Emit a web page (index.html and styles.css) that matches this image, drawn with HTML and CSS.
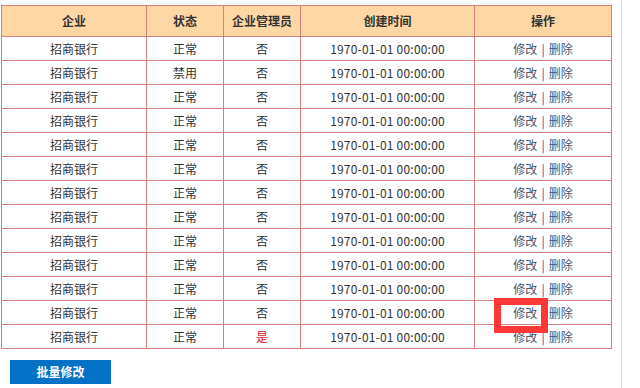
FILE: index.html
```html
<!DOCTYPE html>
<html lang="zh-CN">
<head>
<meta charset="utf-8">
<title>企业列表</title>
<link rel="stylesheet" href="styles.css">
</head>
<body>
<div class="page">
  <table class="grid">
    <colgroup>
      <col class="c1"><col class="c2"><col class="c3"><col class="c4"><col class="c5">
    </colgroup>
    <thead>
      <tr><th>企业</th><th>状态</th><th>企业管理员</th><th>创建时间</th><th>操作</th></tr>
    </thead>
    <tbody>
      <tr><td>招商银行</td><td>正常</td><td>否</td><td class="date">1970-01-01 00:00:00</td><td class="ops"><a>修改</a><span class="sep">|</span><a>删除</a></td></tr>
      <tr><td>招商银行</td><td>禁用</td><td>否</td><td class="date">1970-01-01 00:00:00</td><td class="ops"><a>修改</a><span class="sep">|</span><a>删除</a></td></tr>
      <tr><td>招商银行</td><td>正常</td><td>否</td><td class="date">1970-01-01 00:00:00</td><td class="ops"><a>修改</a><span class="sep">|</span><a>删除</a></td></tr>
      <tr><td>招商银行</td><td>正常</td><td>否</td><td class="date">1970-01-01 00:00:00</td><td class="ops"><a>修改</a><span class="sep">|</span><a>删除</a></td></tr>
      <tr><td>招商银行</td><td>正常</td><td>否</td><td class="date">1970-01-01 00:00:00</td><td class="ops"><a>修改</a><span class="sep">|</span><a>删除</a></td></tr>
      <tr><td>招商银行</td><td>正常</td><td>否</td><td class="date">1970-01-01 00:00:00</td><td class="ops"><a>修改</a><span class="sep">|</span><a>删除</a></td></tr>
      <tr><td>招商银行</td><td>正常</td><td>否</td><td class="date">1970-01-01 00:00:00</td><td class="ops"><a>修改</a><span class="sep">|</span><a>删除</a></td></tr>
      <tr><td>招商银行</td><td>正常</td><td>否</td><td class="date">1970-01-01 00:00:00</td><td class="ops"><a>修改</a><span class="sep">|</span><a>删除</a></td></tr>
      <tr><td>招商银行</td><td>正常</td><td>否</td><td class="date">1970-01-01 00:00:00</td><td class="ops"><a>修改</a><span class="sep">|</span><a>删除</a></td></tr>
      <tr><td>招商银行</td><td>正常</td><td>否</td><td class="date">1970-01-01 00:00:00</td><td class="ops"><a>修改</a><span class="sep">|</span><a>删除</a></td></tr>
      <tr><td>招商银行</td><td>正常</td><td>否</td><td class="date">1970-01-01 00:00:00</td><td class="ops"><a>修改</a><span class="sep">|</span><a>删除</a></td></tr>
      <tr><td>招商银行</td><td>正常</td><td>否</td><td class="date">1970-01-01 00:00:00</td><td class="ops"><span class="mark-wrap"><a>修改</a><span class="mark"></span></span><span class="sep">|</span><a>删除</a></td></tr>
      <tr><td>招商银行</td><td>正常</td><td class="yes">是</td><td class="date">1970-01-01 00:00:00</td><td class="ops"><a>修改</a><span class="sep">|</span><a>删除</a></td></tr>
    </tbody>
  </table>
  <div class="actions">
    <button class="btn">批量修改</button>
  </div>
</div>
</body>
</html>
```

FILE: styles.css
```css
html, body {
  margin: 0;
  padding: 0;
  background: #fff;
}

body {
  font-family: "Noto Sans CJK SC", "Noto Sans", sans-serif;
  font-size: 12px;
  color: #333;
}

.page {
  width: 622px;
  height: 388px;
  border-right: 1px solid #dedede;
  padding-top: 5px;
  padding-left: 1px;
  box-sizing: border-box;
}

.grid {
  border-collapse: collapse;
  table-layout: fixed;
  width: 611px;
}

.c1 { width: 145px; }
.c2 { width: 77px; }
.c3 { width: 77px; }
.c4 { width: 174px; }
.c5 { width: 137px; }

.grid th,
.grid td {
  border: 1px solid #d57f7f;
  text-align: center;
  padding: 0;
  line-height: 16px;
  white-space: nowrap;
}

.grid th {
  background: #ffd7a4;
  font-weight: bold;
  height: 30px;
  color: #333;
}

.grid td {
  height: 23px;
}

.grid td.date {
  letter-spacing: 0.2px;
}

.yes {
  color: #e8141b;
}

.ops a {
  color: #4b5670;
  text-decoration: none;
}

.ops .sep {
  color: #6c2f96;
  margin: 0 4px;
}

.mark-wrap {
  position: relative;
  display: inline-block;
}

.mark {
  position: absolute;
  left: -19px;
  top: -7px;
  width: 54px;
  height: 35px;
  border: 7px solid #fd3838;
  box-sizing: border-box;
}

.actions {
  padding: 11px 0 0 9px;
}

.btn {
  display: block;
  width: 101px;
  height: 24px;
  border: 0;
  padding: 0;
  background: #0371c6;
  color: #fff;
  font-family: "Noto Sans CJK SC", "Noto Sans", sans-serif;
  font-size: 12px;
  font-weight: bold;
  line-height: 24px;
  text-align: center;
}
```
